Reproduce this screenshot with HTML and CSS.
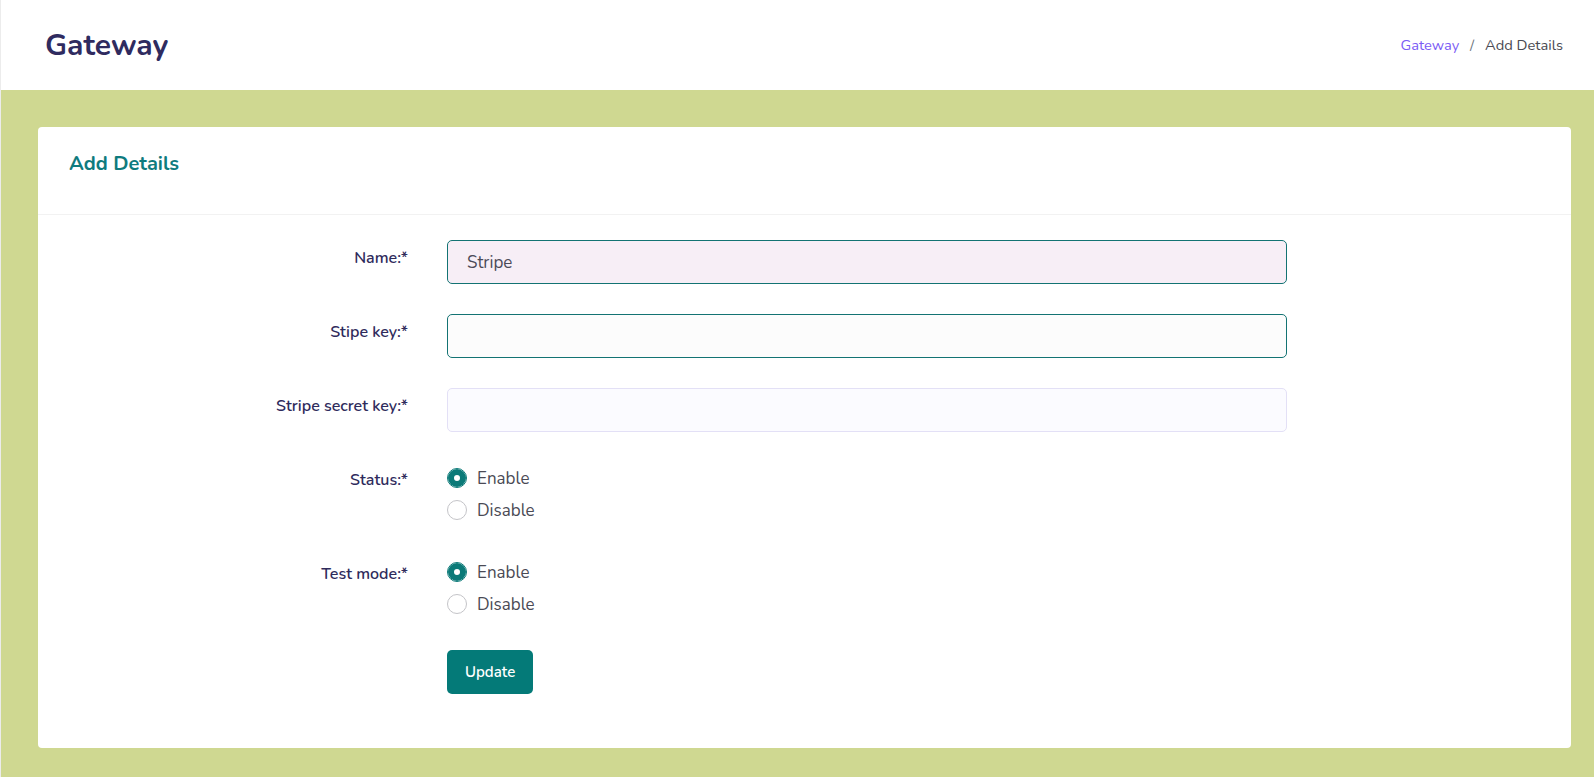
FILE: index.html
```html
<!DOCTYPE html>
<html lang="en">
<head>
    <meta charset="UTF-8">
    <title>Gateway</title>
    <link rel="stylesheet" href="styles.css">
</head>
<body>
    <div class="page">
        <header class="topbar">
            <h1 class="page-title">Gateway</h1>
            <nav class="breadcrumb">
                <a href="#">Gateway</a>
                <span class="sep">/</span>
                <span class="current">Add Details</span>
            </nav>
        </header>

        <main class="content">
            <div class="card">
                <div class="card-header">
                    <h2>Add Details</h2>
                </div>
                <div class="card-body">
                    <form class="gateway-form" action="#" method="post">
                        <label class="form-label" for="name">Name:*</label>
                        <div class="field">
                            <input type="text" id="name" class="input input-filled" value="Stripe">
                        </div>

                        <label class="form-label" for="stripeKey">Stipe key:*</label>
                        <div class="field">
                            <input type="text" id="stripeKey" class="input input-focus">
                        </div>

                        <label class="form-label" for="stripeSecret">Stripe secret key:*</label>
                        <div class="field">
                            <input type="text" id="stripeSecret" class="input">
                        </div>

                        <label class="form-label">Status:*</label>
                        <div class="field radios">
                            <label class="radio"><input type="radio" name="status" checked> Enable</label>
                            <label class="radio"><input type="radio" name="status"> Disable</label>
                        </div>

                        <label class="form-label">Test mode:*</label>
                        <div class="field radios">
                            <label class="radio"><input type="radio" name="testmode" checked> Enable</label>
                            <label class="radio"><input type="radio" name="testmode"> Disable</label>
                        </div>

                        <span></span>
                        <div class="field">
                            <button type="submit" class="btn">Update</button>
                        </div>
                    </form>
                </div>
            </div>
        </main>
    </div>
</body>
</html>
```

FILE: styles.css
```css
body {
    margin: 0;
    font-family: "Nunito", "Open Sans", "Noto Sans", sans-serif;
    background-color: #cfd891;
    color: #2f2b5c;
}
.page {
    min-height: 777px;
    border-left: 1px solid #ececec;
}
.topbar {
    background-color: #fff;
    height: 90px;
    display: flex;
    align-items: center;
    justify-content: space-between;
    padding: 0 31px 0 44px;
}
.page-title {
    margin: 0;
    font-size: 30px;
    font-weight: 700;
    color: #2f2b5f;
}
.breadcrumb {
    font-size: 14.7px;
    color: #4a4a52;
}
.breadcrumb a {
    color: #7b5cf5;
    text-decoration: none;
}
.breadcrumb .sep {
    color: #6c757d;
    padding: 0 7px;
}
.content {
    padding: 37px 23px 30px 37px;
}
.card {
    background-color: #fff;
    border-radius: 4px;
}
.card-header {
    padding: 23px 31px 37px;
    border-bottom: 1px solid #f2f2f2;
}
.card-header h2 {
    margin: 0;
    font-size: 20px;
    font-weight: 700;
    color: #0f7b7e;
}
.card-body {
    padding: 25px 0 54px;
}
.gateway-form {
    display: grid;
    grid-template-columns: 370px 840px;
    column-gap: 39px;
    row-gap: 30px;
}
.form-label {
    text-align: right;
    font-size: 16px;
    font-weight: 600;
    line-height: 21px;
    padding-top: 8px;
    color: #2f2b5c;
}
.input {
    display: block;
    box-sizing: border-box;
    width: 100%;
    height: 44px;
    padding: 0 19px;
    font-family: inherit;
    font-size: 17px;
    color: #4b4a58;
    background-color: #fbfbff;
    border: 1px solid #e3e0f6;
    border-radius: 5px;
    outline: none;
}
.input-filled {
    background-color: #f7eef6;
    border-color: #137373;
}
.input-focus {
    background-color: #fcfcfc;
    border-color: #137373;
}
.radios {
    display: flex;
    flex-direction: column;
}
.radio {
    display: flex;
    align-items: center;
    height: 32px;
    font-size: 17px;
    color: #4a4a55;
    gap: 10px;
}
.radio input {
    appearance: none;
    -webkit-appearance: none;
    margin: 0;
    width: 20px;
    height: 20px;
    border: 1px solid #c4c4c8;
    border-radius: 50%;
    background-color: #fff;
    box-sizing: border-box;
}
.radio input:checked {
    border-color: #0b7a78;
    box-shadow: inset 0 0 0 6px #0b7a78;
}
.btn {
    height: 44px;
    padding: 0 18px;
    font-family: inherit;
    font-size: 15px;
    font-weight: 600;
    color: #fff;
    background-color: #047a78;
    border: none;
    border-radius: 5px;
    cursor: pointer;
}
.btn:hover {
    background-color: #036866;
}
```
